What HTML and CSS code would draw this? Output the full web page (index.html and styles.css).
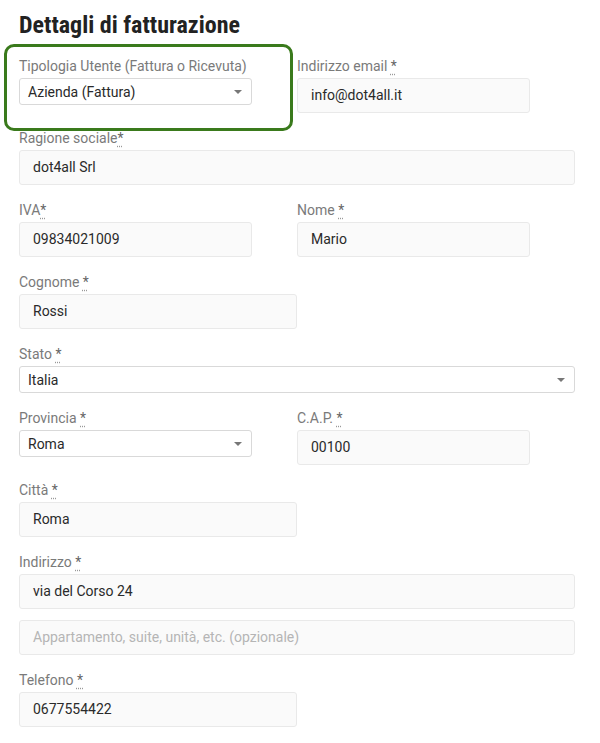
FILE: index.html
```html
<!DOCTYPE html>
<html lang="it">
<head>
<meta charset="utf-8">
<title>Dettagli di fatturazione</title>
<link rel="stylesheet" href="styles.css">
</head>
<body>
<form class="billing">
  <h3 class="title">Dettagli di fatturazione</h3>
  <div class="fields">
    <div class="field highlighted">
      <label class="label">Tipologia Utente (Fattura o Ricevuta)</label>
      <div class="select narrow"><span class="value">Azienda (Fattura)</span><span class="caret"></span></div>
    </div>
    <div class="field">
      <label class="label">Indirizzo email <abbr class="req">*</abbr></label>
      <div class="input narrow">info@dot4all.it</div>
    </div>
    <div class="field full">
      <label class="label">Ragione sociale<abbr class="req">*</abbr></label>
      <div class="input">dot4all Srl</div>
    </div>
    <div class="field">
      <label class="label">IVA<abbr class="req">*</abbr></label>
      <div class="input narrow">09834021009</div>
    </div>
    <div class="field">
      <label class="label">Nome <abbr class="req">*</abbr></label>
      <div class="input narrow">Mario</div>
    </div>
    <div class="field">
      <label class="label">Cognome <abbr class="req">*</abbr></label>
      <div class="input">Rossi</div>
    </div>
    <div class="field full">
      <label class="label">Stato <abbr class="req">*</abbr></label>
      <div class="select"><span class="value">Italia</span><span class="caret"></span></div>
    </div>
    <div class="field">
      <label class="label">Provincia <abbr class="req">*</abbr></label>
      <div class="select narrow"><span class="value">Roma</span><span class="caret"></span></div>
    </div>
    <div class="field">
      <label class="label">C.A.P. <abbr class="req">*</abbr></label>
      <div class="input narrow">00100</div>
    </div>
    <div class="field">
      <label class="label">Città <abbr class="req">*</abbr></label>
      <div class="input">Roma</div>
    </div>
    <div class="field full">
      <label class="label">Indirizzo <abbr class="req">*</abbr></label>
      <div class="input">via del Corso 24</div>
      <div class="input placeholder extra">Appartamento, suite, unità, etc. (opzionale)</div>
    </div>
    <div class="field">
      <label class="label">Telefono <abbr class="req">*</abbr></label>
      <div class="input">0677554422</div>
    </div>
  </div>
</form>
</body>
</html>
```
FILE: styles.css
```css
* { box-sizing: border-box; }
html, body { margin: 0; padding: 0; background: #fff; }
body {
  font-family: Roboto, "Liberation Sans", sans-serif;
  color: #333;
}
.billing {
  padding: 0 25px 0 19px;
}
.title {
  margin: 0 0 15px;
  padding-top: 9px;
  font-family: "Roboto Condensed", "Liberation Sans Narrow", "Liberation Sans", sans-serif;
  font-weight: 700;
  font-size: 24px;
  line-height: 32px;
  color: #222;
}
.fields {
  display: grid;
  grid-template-columns: 1fr 1fr;
  row-gap: 15px;
}
.field { display: flex; flex-direction: column; align-items: flex-start; }
.field.full { grid-column: 1 / span 2; align-items: stretch; }
.field.highlighted { position: relative; }
.field.highlighted::before {
  content: "";
  position: absolute;
  left: -15px;
  top: -12px;
  width: 283px;
  height: 81px;
  border: 3px solid #3a7a1c;
  border-radius: 10px;
  pointer-events: none;
}
.label {
  display: block;
  font-size: 14px;
  line-height: 20px;
  color: #7a7a7a;
  margin-bottom: 2px;
}
.req {
  color: #666;
  text-decoration: underline dotted #999;
  text-underline-offset: 3px;
}
.input {
  width: 100%;
  height: 35px;
  padding: 0 13px;
  border: 1px solid #e9e9e9;
  border-radius: 3px;
  background: #fafafa;
  font-size: 14px;
  line-height: 33px;
  color: #2a2a2a;
  white-space: nowrap;
}
.input.narrow, .select.narrow { width: 233px; }
.input.placeholder { color: #b5b5b5; }
.input.extra { margin-top: 11px; }
.select {
  width: 100%;
  height: 27px;
  padding: 0 8px;
  border: 1px solid #d9d9d9;
  border-radius: 3px;
  background: #fff;
  display: flex;
  align-items: center;
  justify-content: space-between;
  font-size: 14px;
  color: #2a2a2a;
}
.caret {
  width: 0;
  height: 0;
  border-left: 4px solid transparent;
  border-right: 4px solid transparent;
  border-top: 4px solid #777;
  margin-right: 1px;
}
```
